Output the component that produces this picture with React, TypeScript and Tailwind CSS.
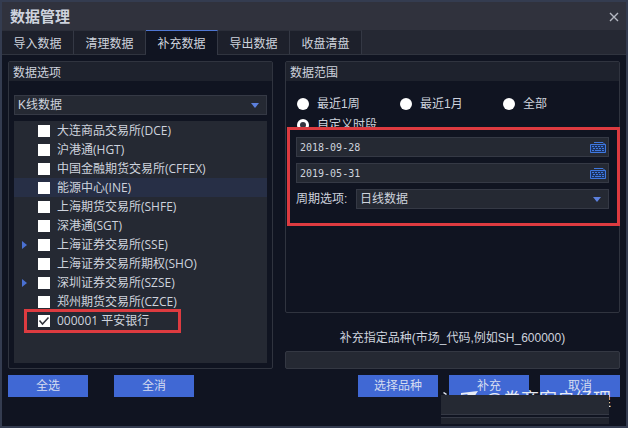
import { useState } from "react";

const tabs = ["导入数据", "清理数据", "补充数据", "导出数据", "收盘清盘"];

const markets = [
  { name: "大连商品交易所(DCE)" },
  { name: "沪港通(HGT)" },
  { name: "中国金融期货交易所(CFFEX)" },
  { name: "能源中心(INE)", active: true },
  { name: "上海期货交易所(SHFE)" },
  { name: "深港通(SGT)" },
  { name: "上海证券交易所(SSE)", expandable: true },
  { name: "上海证券交易所期权(SHO)" },
  { name: "深圳证券交易所(SZSE)", expandable: true },
  { name: "郑州期货交易所(CZCE)" },
  { name: "000001 平安银行", marked: true },
];

const ranges = ["最近1周", "最近1月", "全部"];

function App() {
  const [tab, setTab] = useState("补充数据");
  const [range, setRange] = useState("自定义时段");
  const [checked, setChecked] = useState(["000001 平安银行"]);

  const toggle = (name: string) =>
    setChecked(
      checked.includes(name)
        ? checked.filter((n) => n !== name)
        : [...checked, name]
    );

  return (
    <div className="relative min-h-screen flex flex-col border-2 border-[#343c50] bg-[#101421] text-xs text-[#ced3dd] font-['Liberation_Sans','Noto_Sans_CJK_SC',sans-serif]">
      <header className="flex h-7 items-center justify-between bg-[#30323d] pl-2 pr-[7px] pt-0.5">
        <h1 className="text-[15px] font-bold">数据管理</h1>
        <button aria-label="关闭">
          <svg width="10" height="10" viewBox="0 0 10 10" stroke="#b4b8c2" strokeWidth="1.4">
            <path d="M1 1l8 8M9 1L1 9" />
          </svg>
        </button>
      </header>

      <nav className="flex h-[25px] border-b border-[#30343f] bg-[#252833]">
        {tabs.map((t) => (
          <button
            key={t}
            onClick={() => setTab(t)}
            className={
              t === tab
                ? "-mb-px w-18 border-t border-r border-t-[#4f76d2] border-r-[#343844] bg-[#101421] pt-px"
                : "w-18 border-t border-r border-t-[#2b2e39] border-r-[#343844] bg-[#1d202b] pt-0.5"
            }
          >
            {t}
          </button>
        ))}
      </nav>

      <main className="flex gap-3 px-1.5 pt-1.5">
        <div className="w-[265px] shrink-0">
          <section className="h-[308px] rounded-xs border border-[#30343f]">
            <h2 className="h-[19px] bg-[#1e222d] pl-1 leading-[22px]">数据选项</h2>
            <div className="px-[5px] pt-3.5">
              <Select label="数据类型" value="K线数据" />
              <ul className="mt-1.5 h-[242px] bg-[#252933]">
                {markets.map((m) => (
                  <li
                    key={m.name}
                    className={
                      m.active
                        ? "relative flex h-[19px] items-center bg-[#272f46] pl-2"
                        : "relative flex h-[19px] items-center pl-2"
                    }
                  >
                    <span className="w-4">{m.expandable && <Expand />}</span>
                    <label className="flex items-center gap-[7px] whitespace-nowrap font-['Open_Sans','Noto_Sans_CJK_SC',sans-serif]">
                      <Checkbox
                        checked={checked.includes(m.name)}
                        onChange={() => toggle(m.name)}
                      />
                      {m.name}
                    </label>
                    {m.marked && (
                      <span className="pointer-events-none absolute -top-0.5 left-2.5 h-6 w-[157px] border-3 border-[#dd3b40]" />
                    )}
                  </li>
                ))}
              </ul>
            </div>
          </section>
          <div className="mt-1.5 flex gap-[26px]">
            <Button>全选</Button>
            <Button>全消</Button>
          </div>
        </div>

        <div className="min-w-0 flex-1">
          <section className="h-[252px] rounded-xs border border-[#30343f]">
            <h2 className="h-[19px] bg-[#1e222d] pl-1 leading-[22px]">数据范围</h2>
            <div className="flex h-[47px] flex-wrap content-start overflow-hidden pl-[11px] pt-3">
              {[...ranges, "自定义时段"].map((r) => (
                <label key={r} className="flex h-[21px] w-[103px] items-center gap-2">
                  <input
                    type="radio"
                    name="range"
                    checked={r === range}
                    onChange={() => setRange(r)}
                    className="size-3 appearance-none rounded-full border-white bg-white checked:border-3 checked:bg-[#343640]"
                  />
                  {r}
                </label>
              ))}
            </div>
            <div className="relative flex flex-col gap-1.5 px-2.5 pt-[9px]">
              <span className="pointer-events-none absolute -right-px -top-px left-px h-[99px] border-3 border-[#dd3b40]" />
              <DateField label="开始日期" value="2018-09-28" />
              <DateField label="结束日期" value="2019-05-31" />
              <div className="flex items-center">
                <label htmlFor="period" className="w-15 shrink-0">
                  周期选项:
                </label>
                <Select id="period" value="日线数据" />
              </div>
            </div>
          </section>
          <label htmlFor="symbol" className="mt-4 block text-center leading-[18px]">
            补充指定品种(市场_代码,例如SH_600000)
          </label>
          <input
            id="symbol"
            className="mt-1 block h-[18px] w-full rounded-xs border border-[#343843] bg-[#252933] px-1"
          />
          <div className="mt-1.5 flex justify-end gap-[11px]">
            <Button>选择品种</Button>
            <Button>补充</Button>
            <Button>取消</Button>
          </div>
        </div>
      </main>

      <Watermark />
    </div>
  );
}

const Button = ({ children }: { children: string }) => (
  <button className="h-[22px] w-20 bg-[#4068d4] text-[#d5dcf0]">{children}</button>
);

const Select = ({ id, label, value }: { id?: string; label?: string; value: string }) => (
  <div className="relative w-full">
    <select
      id={id}
      aria-label={label}
      className="block h-5 w-full appearance-none border border-[#353945] bg-[#252933] pl-[3px]"
    >
      <option>{value}</option>
    </select>
    <svg className="pointer-events-none absolute right-2 top-2" width="8" height="5" viewBox="0 0 8 5" fill="#5c80dd">
      <path d="M0 0h8L4 5z" />
    </svg>
  </div>
);

const DateField = ({ label, value }: { label: string; value: string }) => (
  <div className="relative">
    <input
      aria-label={label}
      defaultValue={value}
      className="block h-5 w-full border border-[#353945] bg-[#252933] pl-[3px] font-['DejaVu_Sans_Mono',monospace] text-[10px]"
    />
    <svg className="absolute right-0.5 top-1" width="18" height="13" viewBox="0 0 18 13" fill="none" stroke="#3f78e0">
      <path d="M1.5 3.5h15v8h-15z" fill="#1c3360" />
      <path d="M5 1.5h9l2 2" />
      <path d="M3 5.5h12" strokeDasharray="2 1" />
      <path d="M4 7.5h11" strokeDasharray="2 1" />
      <path d="M3 9.5h2M6 9.5h6M13 9.5h2" />
    </svg>
  </div>
);

const Checkbox = ({ checked, onChange }: { checked: boolean; onChange: () => void }) => (
  <span className="relative size-3">
    <input
      type="checkbox"
      checked={checked}
      onChange={onChange}
      className="block size-3 appearance-none bg-white"
    />
    {checked && (
      <svg className="pointer-events-none absolute inset-0" width="12" height="12" viewBox="0 0 12 12" fill="none" stroke="#30323a" strokeWidth="1.5">
        <path d="M1.5 5.5L4.5 9l6-6.5" />
      </svg>
    )}
  </span>
);

const Expand = () => (
  <svg width="5" height="8" viewBox="0 0 5 8" fill="#4a70d2">
    <path d="M0 0l5 4-5 4z" />
  </svg>
);

// signature in the corner, mostly hidden behind two bars
const Watermark = () => (
  <div className="pointer-events-none absolute bottom-0 right-[15px] h-9 w-[172px] overflow-hidden">
    <div className="absolute right-0 top-0 whitespace-nowrap text-lg leading-5 text-[#e6ebf5]">
      @券商客户经理
    </div>
    <svg className="absolute left-0 top-0" width="44" height="8" viewBox="0 0 44 8" fill="#e6ebf5">
      <path d="M5 2l3 2-1 1-3-2zM22 3l17-2-4 6H25l4-3-7 1z" />
    </svg>
    <div className="absolute right-0.5 top-[5px] h-5 w-[168px] border-b border-[#353945] bg-[#252933]" />
    <div className="absolute right-0.5 top-[27px] h-[7px] w-[168px] border-t border-[#353945] bg-[#20242e]" />
  </div>
);

export default App;
